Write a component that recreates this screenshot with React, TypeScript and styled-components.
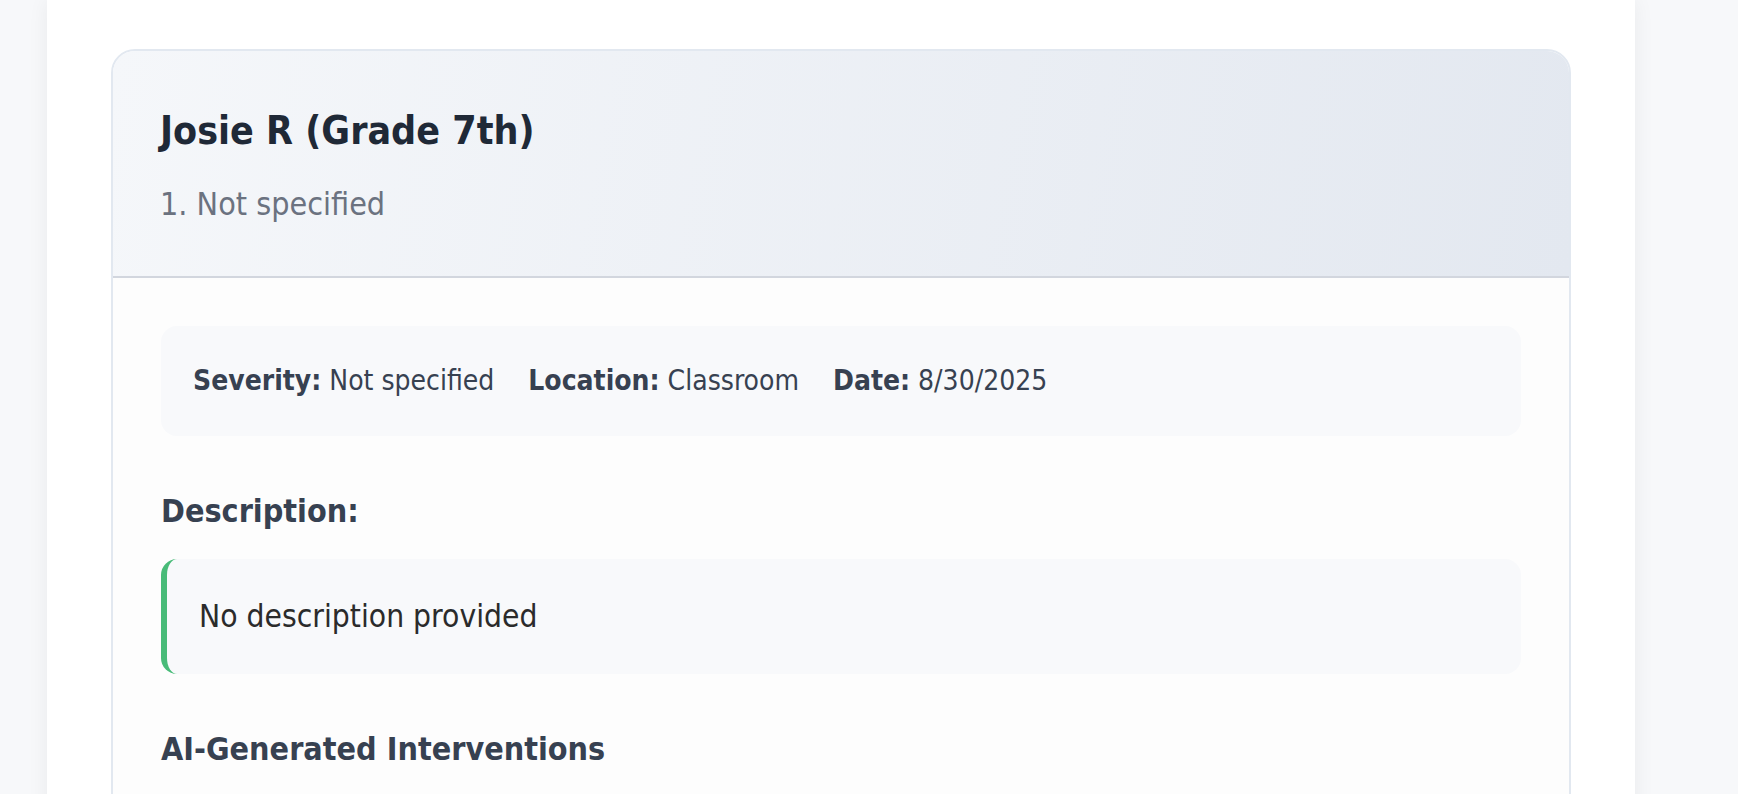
import styled, { createGlobalStyle } from "styled-components"

const GlobalStyle = createGlobalStyle`
  html, body {
    margin: 0;
    padding: 0;
    background: #f7f8fa;
    font-family: "DejaVu Sans Condensed", "DejaVu Sans", sans-serif;
  }
  * {
    box-sizing: border-box;
  }
`

const Page = styled.div`
  padding-left: 47px;
  min-height: 100vh;
  overflow: hidden;
`

const Panel = styled.main`
  width: 1588px;
  min-height: 100vh;
  background: #ffffff;
  box-shadow: 0 0 20px rgba(15, 23, 42, 0.06);
  padding: 49px 64px 0;
`

const Card = styled.section`
  border: 2px solid #e2e8f0;
  border-radius: 24px;
  overflow: hidden;
  background: #fdfdfd;
`

const Header = styled.header`
  background: linear-gradient(100deg, #f5f7fa 0%, #e3e8f0 100%);
  border-bottom: 2px solid #d2d6de;
  padding: 50px 48px 48px 47px;
  h2 {
    margin: 0 0 19px;
    font-size: 39px;
    line-height: 60px;
    font-weight: 700;
    color: #1f2937;
  }
  p {
    margin: 0;
    font-size: 32px;
    line-height: 48px;
    color: #6b7280;
  }
`

const Body = styled.div`
  padding: 48px;
`

const MetaBox = styled.div`
  display: flex;
  gap: 34px;
  background: #f8f9fb;
  border-radius: 16px;
  padding: 31px 32px;
  font-size: 28px;
  line-height: 48px;
  color: #374151;
  strong {
    font-weight: 700;
  }
`

const SectionTitle = styled.h3`
  margin: 51px 0 24px;
  font-size: 32px;
  line-height: 48px;
  font-weight: 700;
  color: #374151;
`

const DescBox = styled.div<{ $accent: string }>`
  background: #f8f9fb;
  border-left: 6px solid ${p => p.$accent};
  border-radius: 16px;
  padding: 32px;
  font-size: 31.5px;
  line-height: 51px;
  color: #2b2b2b;
`

const incident = {
  student: "Josie R",
  grade: "7th",
  type: "Not specified",
  severity: "Not specified",
  location: "Classroom",
  date: "8/30/2025",
  description: "",
}

export default function App() {
  const meta = [
    { label: "Severity", value: incident.severity },
    { label: "Location", value: incident.location },
    { label: "Date", value: incident.date },
  ]

  return (
    <>
      <GlobalStyle />
      <Page>
        <Panel>
          <Card>
            <Header>
              <h2>{incident.student} (Grade {incident.grade})</h2>
              <p>1. {incident.type}</p>
            </Header>
            <Body>
              <MetaBox>
                {meta.map(item => (
                  <span key={item.label}>
                    <strong>{item.label}:</strong> {item.value}
                  </span>
                ))}
              </MetaBox>
              <SectionTitle>Description:</SectionTitle>
              <DescBox $accent="#48bb78">{incident.description || "No description provided"}</DescBox>
              <SectionTitle>AI-Generated Interventions</SectionTitle>
            </Body>
          </Card>
        </Panel>
      </Page>
    </>
  )
}
